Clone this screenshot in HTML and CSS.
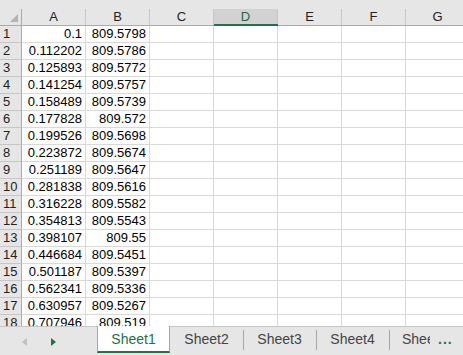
FILE: index.html
```html
<!DOCTYPE html>
<html lang="en">
<head>
    <meta charset="UTF-8">
    <title>Sheet1</title>
    <link rel="stylesheet" href="styles.css">
</head>
<body>
    <div class="workbook">
        <div class="grid" id="grid">
            <div class="colhead corner"><span><i class="tri"></i></span></div>
            <div class="colhead"><span>A</span></div>
            <div class="colhead"><span>B</span></div>
            <div class="colhead"><span>C</span></div>
            <div class="colhead selected"><span>D</span></div>
            <div class="colhead"><span>E</span></div>
            <div class="colhead"><span>F</span></div>
            <div class="colhead"><span>G</span></div>
        </div>

        <div class="tabbar">
            <div class="nav">
                <span class="arrow left"></span>
                <span class="arrow right"></span>
            </div>
            <div class="tab active">Sheet1</div>
            <div class="tab">Sheet2</div>
            <div class="tab">Sheet3</div>
            <div class="tab">Sheet4</div>
            <div class="tab clipped"><span>Sheet5</span></div>
            <div class="more">...</div>
        </div>
    </div>

    <script>
        const data = [
            ["0.1", "809.5798"], ["0.112202", "809.5786"], ["0.125893", "809.5772"],
            ["0.141254", "809.5757"], ["0.158489", "809.5739"], ["0.177828", "809.572"],
            ["0.199526", "809.5698"], ["0.223872", "809.5674"], ["0.251189", "809.5647"],
            ["0.281838", "809.5616"], ["0.316228", "809.5582"], ["0.354813", "809.5543"],
            ["0.398107", "809.55"], ["0.446684", "809.5451"], ["0.501187", "809.5397"],
            ["0.562341", "809.5336"], ["0.630957", "809.5267"], ["0.707946", "809.519"]
        ];

        // Filas de la hoja
        const grid = document.getElementById("grid");
        data.forEach((row, i) => {
            let html = `<div class="rowhead">${i + 1}</div>`;
            html += `<div class="cell">${row[0]}</div><div class="cell">${row[1]}</div>`;
            for (let c = 0; c < 5; c++) html += `<div class="cell"></div>`;
            grid.insertAdjacentHTML("beforeend", html);
        });
    </script>
</body>
</html>
```

FILE: styles.css
```css
body {
    margin: 0;
    font-family: "Liberation Sans", Arial, sans-serif;
    font-size: 13px;
    color: #000;
    background: #fff;
    overflow: hidden;
}
.workbook {
    width: 463px;
    height: 355px;
    display: flex;
    flex-direction: column;
    overflow: hidden;
}

/* Cuadricula */
.grid {
    flex: 1;
    overflow: hidden;
    display: grid;
    grid-template-columns: 22px repeat(7, 64px);
    grid-template-rows: 26px;
    grid-auto-rows: 17px;
}
.colhead {
    background: #e6e6e6;
    border-bottom: 1px solid #ababab;
    display: flex;
    align-items: flex-end;
}
.colhead span {
    flex: 1;
    height: 16px;
    line-height: 16px;
    text-align: center;
    color: #222;
    border-right: 1px solid #c6c6c6;
    position: relative;
}
.colhead.corner span {
    border-right-color: #ababab;
}
.colhead.selected {
    border-bottom: 2px solid #217346;
}
.colhead.selected span {
    height: 15px;
    background: #d2d2d2;
    color: #1e6b40;
}
.tri {
    position: absolute;
    right: 3px;
    bottom: 3px;
    width: 0;
    height: 0;
    border-left: 8px solid transparent;
    border-bottom: 8px solid #b4b4b4;
}
.rowhead {
    background: #e6e6e6;
    color: #222;
    padding-left: 3px;
    line-height: 16px;
    border-right: 1px solid #ababab;
    border-bottom: 1px solid #c6c6c6;
}
.cell {
    box-sizing: border-box;
    line-height: 16px;
    text-align: right;
    padding-right: 3px;
    white-space: nowrap;
    border-right: 1px solid #d9d9d9;
    border-bottom: 1px solid #d9d9d9;
}

/* Pestañas de hojas */
.tabbar {
    height: 29px;
    flex: none;
    display: flex;
    background: #e6e6e6;
    border-top: 1px solid #c6c6c6;
    box-sizing: border-box;
    font-size: 14px;
    color: #444;
}
.nav {
    width: 97px;
    display: flex;
    align-items: center;
    gap: 24px;
    padding-left: 22px;
    padding-top: 2px;
    box-sizing: border-box;
}
.arrow {
    width: 0;
    height: 0;
    border-top: 4px solid transparent;
    border-bottom: 4px solid transparent;
}
.arrow.left {
    border-right: 5px solid #c0c0c0;
}
.arrow.right {
    border-left: 5px solid #217346;
}
.tab {
    width: 73px;
    box-sizing: border-box;
    text-align: center;
    line-height: 25px;
    position: relative;
}
.tab::before {
    content: "";
    position: absolute;
    left: 0;
    top: 3px;
    height: 20px;
    border-left: 1px solid #a6a6a6;
}
.tab.active {
    background: #fff;
    color: #217346;
    margin-top: -1px;
    height: 24px;
    line-height: 24px;
    border-left: 1px solid #a6a6a6;
    border-right: 1px solid #a6a6a6;
    border-bottom: 2px solid #217346;
    padding-top: 1px;
    box-sizing: content-box;
    width: 71px;
}
.tab.active::before,
.tab.active + .tab::before {
    display: none;
}
.tab.clipped {
    width: 28px;
    overflow: hidden;
    text-align: left;
    padding-left: 13px;
    white-space: nowrap;
    box-sizing: content-box;
}
.tab.clipped span {
    display: block;
    width: 28px;
    overflow: hidden;
}
.more {
    color: #217346;
    font-weight: bold;
    line-height: 25px;
    padding-left: 8px;
    letter-spacing: 1px;
}
```
